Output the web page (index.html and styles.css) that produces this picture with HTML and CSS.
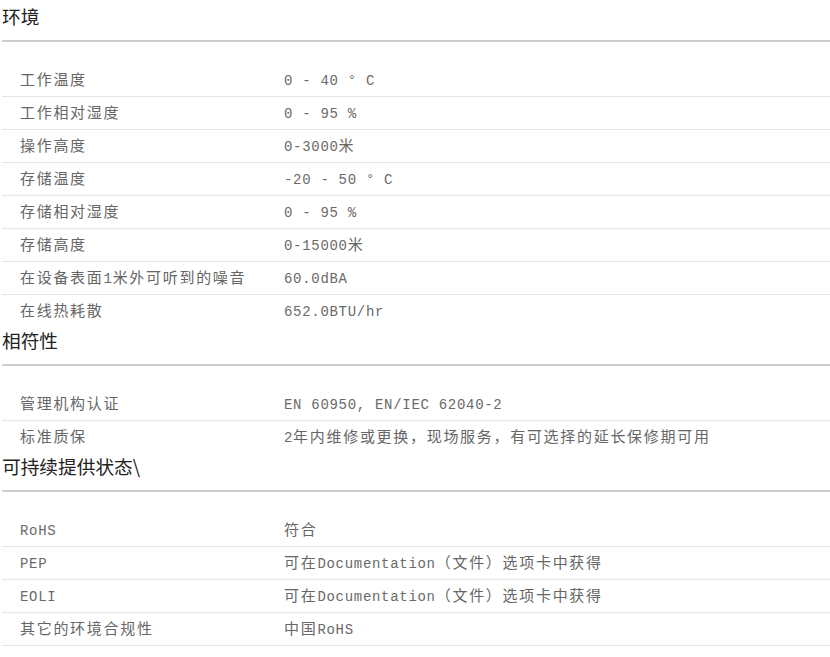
FILE: index.html
```html
<!DOCTYPE html>
<html lang="zh-CN">
<head>
<meta charset="utf-8">
<title>规格</title>
<link rel="stylesheet" href="styles.css">
</head>
<body>
<section class="section">
  <h3 class="section-title">环境</h3>
  <div class="spec-list">
    <div class="row"><div class="label">工作温度</div><div class="value"><span class="en">0 - 40 ° C</span></div></div>
    <div class="row"><div class="label">工作相对湿度</div><div class="value"><span class="en">0 - 95 %</span></div></div>
    <div class="row"><div class="label">操作高度</div><div class="value"><span class="en">0-3000</span>米</div></div>
    <div class="row"><div class="label">存储温度</div><div class="value"><span class="en">-20 - 50 ° C</span></div></div>
    <div class="row"><div class="label">存储相对湿度</div><div class="value"><span class="en">0 - 95 %</span></div></div>
    <div class="row"><div class="label">存储高度</div><div class="value"><span class="en">0-15000</span>米</div></div>
    <div class="row"><div class="label">在设备表面<span class="en">1</span>米外可听到的噪音</div><div class="value"><span class="en">60.0dBA</span></div></div>
    <div class="row row-last"><div class="label">在线热耗散</div><div class="value"><span class="en">652.0BTU/hr</span></div></div>
  </div>
</section>
<section class="section">
  <h3 class="section-title">相符性</h3>
  <div class="spec-list">
    <div class="row"><div class="label">管理机构认证</div><div class="value"><span class="en">EN 60950, EN/IEC 62040-2</span></div></div>
    <div class="row row-last"><div class="label">标准质保</div><div class="value"><span class="en">2</span>年内维修或更换，现场服务，有可选择的延长保修期可用</div></div>
  </div>
</section>
<section class="section">
  <h3 class="section-title">可持续提供状态\</h3>
  <div class="spec-list">
    <div class="row"><div class="label"><span class="en">RoHS</span></div><div class="value">符合</div></div>
    <div class="row"><div class="label"><span class="en">PEP</span></div><div class="value">可在<span class="en">Documentation</span>（文件）选项卡中获得</div></div>
    <div class="row"><div class="label"><span class="en">EOLI</span></div><div class="value">可在<span class="en">Documentation</span>（文件）选项卡中获得</div></div>
    <div class="row"><div class="label">其它的环境合规性</div><div class="value">中国<span class="en">RoHS</span></div></div>
  </div>
</section>
</body>
</html>
```
FILE: styles.css
```css
html, body {
  margin: 0;
  background: #ffffff;
}

body {
  padding: 4px 0 0 2px;
  font-family: "Noto Sans CJK SC", "Noto Sans", sans-serif;
  color: #666666;
}

.section-title {
  margin: 0;
  font-size: 18.7px;
  font-weight: normal;
  line-height: 24px;
  color: #222222;
  padding-bottom: 12px;
  border-bottom: 2px solid #cccccc;
}

.spec-list {
  margin-top: 22px;
}

.row {
  display: grid;
  grid-template-columns: 282px 1fr;
  height: 28px;
  padding-bottom: 4px;
  align-items: center;
  border-bottom: 1px solid #e6e6e6;
  font-size: 15px;
  letter-spacing: 1.7px;
  white-space: nowrap;
}

.row-last {
  border-bottom-color: transparent;
}

.label {
  padding-left: 18px;
}

.en {
  font-family: "Liberation Mono", monospace;
  font-size: 14px;
  letter-spacing: 0.7px;
  color: #6a6a6a;
}
```
